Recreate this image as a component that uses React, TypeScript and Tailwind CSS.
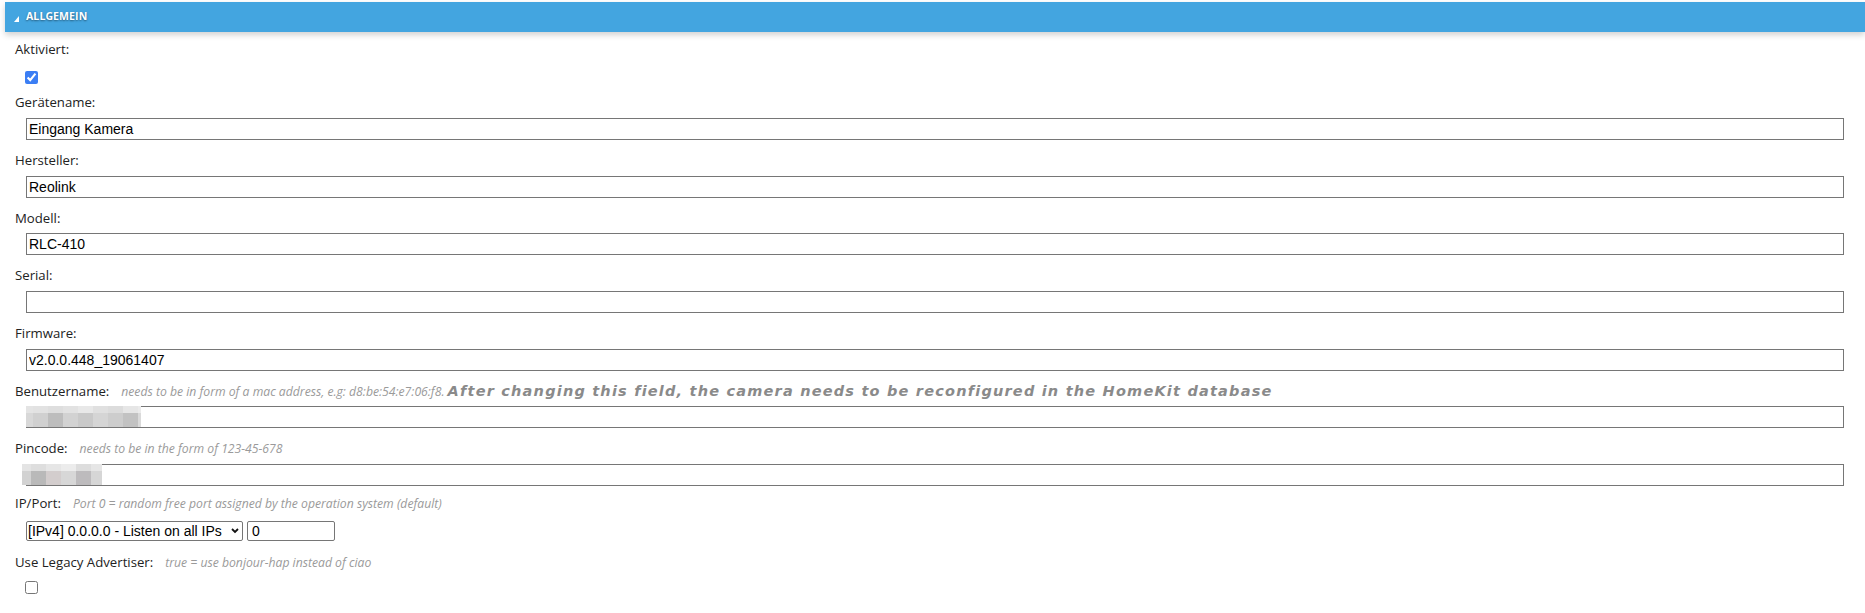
import { useState } from "react";

type Field = {
  label: string;
  value: string;
  hint?: string;
  hintBold?: string;
  mosaic?: "user" | "pin";
};

const fields: Field[] = [
  { label: "Gerätename:", value: "Eingang Kamera" },
  { label: "Hersteller:", value: "Reolink" },
  { label: "Modell:", value: "RLC-410" },
  { label: "Serial:", value: "" },
  { label: "Firmware:", value: "v2.0.0.448_19061407" },
  {
    label: "Benutzername:",
    value: "",
    hint: "needs to be in form of a mac address, e.g: d8:be:54:e7:06:f8. ",
    hintBold: "After changing this field, the camera needs to be reconfigured in the HomeKit database",
    mosaic: "user",
  },
  { label: "Pincode:", value: "", hint: "needs to be in the form of 123-45-678", mosaic: "pin" },
];

// pixelated blur over the hidden values
const userTop = ["#e4e4e4", "#e2e2e2", "#dedede", "#e2e2e2", "#e8e8e8", "#e0e0e0", "#dcdcdc", "#e6e6e6", "#ebebeb"];
const userBottom = ["#d8d8d8", "#d0d0d0", "#bdbdbd", "#d2d2d2", "#c9c9c9", "#d5d5d5", "#cdcdcd", "#c2c2c2", "#dadada"];
const userWidths = [7, 15, 15, 15, 15, 15, 15, 15, 3];
const pinTop = ["#e4e4e4", "#dedede", "#e6e6e6", "#ececec", "#dddddd", "#e6e6e6"];
const pinBottom = ["#d2d2d2", "#b9b9b9", "#d3cdcd", "#d7d7d7", "#bdbbbd", "#d6d6d6"];
const pinWidths = [9, 15, 15, 15, 15, 11];

const Mosaic = ({ kind }: { kind: "user" | "pin" }) => {
  const top = kind === "user" ? userTop : pinTop;
  const bottom = kind === "user" ? userBottom : pinBottom;
  const widths = kind === "user" ? userWidths : pinWidths;
  return (
    <div className={kind === "user" ? "absolute left-0 top-0 flex flex-col" : "absolute left-[-4px] top-0 flex flex-col"}>
      <div className="flex h-[7px]">
        {top.map((c, i) => (
          <div key={i} style={{ width: widths[i], background: c }} />
        ))}
      </div>
      <div className="flex h-[14px]">
        {bottom.map((c, i) => (
          <div key={i} style={{ width: widths[i], background: c }} />
        ))}
      </div>
    </div>
  );
};

const Label = ({ text, hint, hintBold, className }: { text: string; hint?: string; hintBold?: string; className: string }) => (
  <div className={`flex items-baseline gap-[12px] leading-[19.6px] ${className}`}>
    <span>{text}</span>
    {hint && (
      <span className="text-[12.2px] italic text-[#9a9a9a]">
        {hint}
        {hintBold && (
          <b className="font-['DejaVu_Sans',sans-serif] text-[14.5px] font-bold tracking-[1.2px] text-[#8a8a8a]">
            {hintBold}
          </b>
        )}
      </span>
    )}
  </div>
);

const App = () => {
  const [active, setActive] = useState(true);
  const [legacy, setLegacy] = useState(false);

  return (
    <div className="min-h-screen bg-white pt-[2px] font-['Open_Sans',sans-serif] text-[13.2px] text-[#222]">
      <div className="ml-[5px] flex h-[30px] items-center bg-[#43a5e0] pl-[9px] shadow-[0_3px_6px_rgba(0,0,0,0.18)]">
        <svg width="5" height="6" viewBox="0 0 5 6" className="mt-[4px]">
          <polygon points="5,0 5,6 0,6" fill="#fff" />
        </svg>
        <span className="ml-[7px] text-[10.5px] font-bold tracking-[0.1px] text-white [text-shadow:0_1px_2px_rgba(0,0,0,0.45)]">
          ALLGEMEIN
        </span>
      </div>

      <div className="pl-[15px] pr-[21px]">
        <Label text="Aktiviert:" className="mt-[8px]" />
        <div className="mt-[11px] flex h-[13px] pl-[10px]">
          <input
            type="checkbox"
            checked={active}
            onChange={() => setActive(!active)}
            className="m-0 h-[13px] w-[13px] accent-[#3b7ef4]"
          />
        </div>

        {fields.map((f, i) => (
          <div key={f.label}>
            <Label text={f.label} hint={f.hint} hintBold={f.hintBold} className={i === 0 ? "mt-[9px]" : "mt-[11px]"} />
            <div className={i === 0 ? "relative ml-[11px] mt-[6px]" : "relative ml-[11px] mt-[5px]"}>
              <input
                type="text"
                defaultValue={f.value}
                className="block h-[22px] w-full border border-[#767676] px-[2px] font-['Liberation_Sans',Arial,sans-serif] text-[14px] text-black outline-none"
              />
              {f.mosaic && <Mosaic kind={f.mosaic} />}
            </div>
          </div>
        ))}

        <Label text="IP/Port:" hint="Port 0 = random free port assigned by the operation system (default)" className="mt-[8px]" />
        <div className="ml-[11px] mt-[8px] flex gap-[4px]">
          <div className="relative">
            <select className="block h-[20px] w-[217px] appearance-none rounded-[2px] border border-[#767676] pl-[1px] font-['Liberation_Sans',Arial,sans-serif] text-[14px] leading-[18px] text-black outline-none">
              <option>[IPv4] 0.0.0.0 - Listen on all IPs</option>
            </select>
            <svg width="8" height="6" viewBox="0 0 8 6" className="pointer-events-none absolute right-[4px] top-[7px]">
              <polyline points="1,1 4,4 7,1" fill="none" stroke="#111" strokeWidth="1.8" />
            </svg>
          </div>
          <input
            type="text"
            defaultValue="0"
            className="block h-[20px] w-[88px] rounded-[2px] border border-[#767676] px-[4px] font-['Liberation_Sans',Arial,sans-serif] text-[14px] text-black outline-none"
          />
        </div>

        <Label text="Use Legacy Advertiser:" hint="true = use bonjour-hap instead of ciao" className="mt-[12px]" />
        <div className="mt-[8px] flex h-[13px] pl-[10px]">
          <input
            type="checkbox"
            checked={legacy}
            onChange={() => setLegacy(!legacy)}
            className="m-0 h-[13px] w-[13px]"
          />
        </div>
      </div>
    </div>
  );
};

export default App;
